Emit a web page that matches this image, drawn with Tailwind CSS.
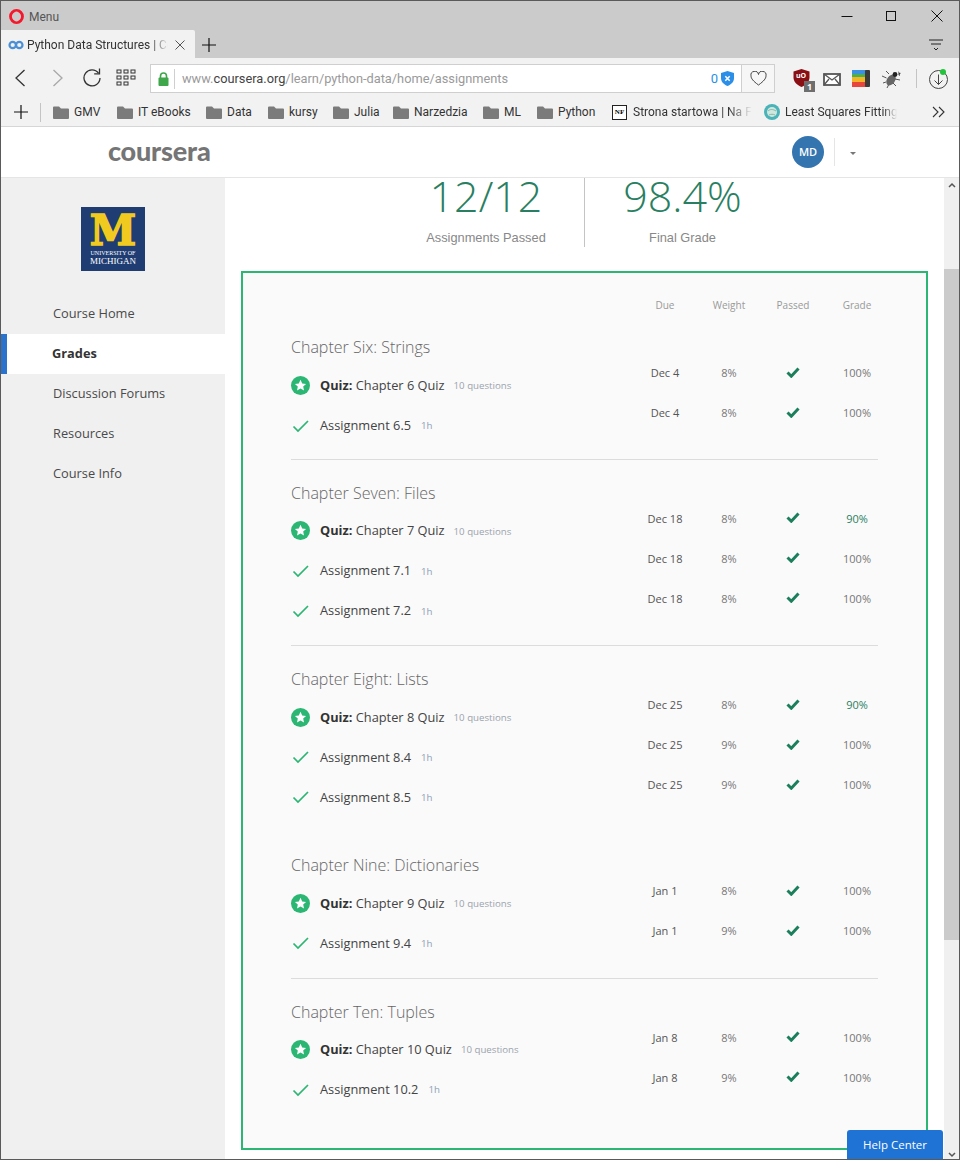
<!DOCTYPE html>
<html>
<head>
<meta charset="utf-8">
<script src="https://cdn.jsdelivr.net/npm/@tailwindcss/browser@4"></script>
</head>
<body class="bg-white">
<div class="relative w-[960px] h-[1160px] overflow-hidden flex flex-col border border-[#5a5a5a] font-['Open_Sans',sans-serif]">
  <!-- title bar -->
  <div class="h-[29px] bg-[#cbcbcb] flex items-center pl-[8px] shrink-0">
    <svg width="15" height="15" viewBox="0 0 15 15" class="mt-[2px]"><circle cx="7.500" cy="7.500" r="6" fill="none" stroke="#f5182c" stroke-width="2.800"/><ellipse cx="7.500" cy="7.500" rx="2.600" ry="5" fill="#cbcbcb"/></svg>
    <span class="ml-[5px] mt-[2px] text-[12px] text-[#555] font-['Roboto',sans-serif]">Menu</span>
    <div class="ml-auto flex items-center pr-[16px]">
      <svg width="12" height="12" viewBox="0 0 12 12" class="mr-[32px]"><path d="M0.500 6.500h11" stroke="#111" stroke-width="1"/></svg>
      <svg width="12" height="12" viewBox="0 0 12 12" class="mr-[34px] mt-[1px]"><rect x="1.500" y="1.500" width="9" height="9" fill="none" stroke="#111"/></svg>
      <svg width="12" height="12" viewBox="0 0 12 12"><path d="M0.500 0.500l11 11M11.500 0.500l-11 11" stroke="#111" stroke-width="1"/></svg>
    </div>
  </div>
  <!-- tab row -->
  <div class="h-[28px] bg-[#cbcbcb] flex items-center shrink-0">
    <div class="w-[194px] h-full bg-[#f2f2f2] flex items-center pl-[7px] pt-[2px] rounded-tr-[2px]">
      <svg width="16" height="10" viewBox="0 0 16 10"><circle cx="4.700" cy="5" r="3.200" fill="none" stroke="#4b90d6" stroke-width="2.200"/><circle cx="11.300" cy="5" r="3.200" fill="none" stroke="#4b90d6" stroke-width="2.200"/></svg>
      <span class="ml-[3px] w-[141px] whitespace-nowrap text-[12px] text-[#333] font-['Roboto',sans-serif] [mask-image:linear-gradient(to_right,black_88%,transparent)]">Python Data Structures | Co</span>
      <svg width="10" height="10" viewBox="0 0 10 10" class="ml-[7px]"><path d="M0.500 0.500l9 9M9.500 0.500l-9 9" stroke="#555" stroke-width="1"/></svg>
    </div>
    <svg width="14" height="14" viewBox="0 0 14 14" class="ml-[7px] mt-[2px]"><path d="M7 0v14M0 7h14" stroke="#111" stroke-width="1.200"/></svg>
    <svg width="14" height="12" viewBox="0 0 14 12" class="ml-auto mr-[16px] mt-[2px]"><path d="M0 1h14M2 5h10M5 9l2 2 2-2" fill="none" stroke="#222" stroke-width="1"/></svg>
  </div>
  <!-- toolbar -->
  <div class="h-[37px] bg-[#f2f2f2] flex items-start pt-[6px] shrink-0">
    <svg width="12" height="18" viewBox="0 0 12 18" class="ml-[13px] mt-[5px]"><path d="M10.500 1L2 9l8.500 8" fill="none" stroke="#333" stroke-width="1.300"/></svg>
    <svg width="12" height="18" viewBox="0 0 12 18" class="ml-[26px] mt-[5px]"><path d="M1.500 1L10 9l-8.500 8" fill="none" stroke="#a8a8a8" stroke-width="1.300"/></svg>
    <svg width="20" height="20" viewBox="0 0 20 20" class="ml-[18px] mt-[3px]"><path d="M16.500 6.200A8 8 0 1 0 18 11" fill="none" stroke="#333" stroke-width="1.300"/><path d="M17.500 1.500v5.300h-5.300" fill="none" stroke="#333" stroke-width="1.300"/></svg>
    <svg width="20" height="17" viewBox="0 0 20 17" class="ml-[14px] mt-[5px]" fill="none" stroke="#333" stroke-width="1"><rect x="1" y="1" width="4" height="3"/><rect x="8" y="1" width="4" height="3"/><rect x="15" y="1" width="4" height="3"/><rect x="1" y="7" width="4" height="3"/><rect x="8" y="7" width="4" height="3"/><rect x="15" y="7" width="4" height="3"/><rect x="1" y="13" width="4" height="3"/><rect x="8" y="13" width="4" height="3"/></svg>
    <div class="ml-[14px] w-[625px] h-[29px] bg-white border border-[#cfcfcf] flex items-center">
      <svg width="11" height="14" viewBox="0 0 11 14" class="ml-[7px]"><path d="M2.500 6V4a3 3 0 0 1 6 0v2" fill="none" stroke="#3fa64b" stroke-width="1.600"/><rect x="0.500" y="5.500" width="10" height="8.500" rx="1" fill="#3fa64b"/></svg>
      <span class="ml-[5px] w-px h-[20px] bg-[#cfcfcf]"></span>
      <span class="ml-[7px] text-[12.800px] text-[#9a9a9a] whitespace-nowrap font-['Roboto',sans-serif]">www.<span class="text-[#444]">coursera.org</span>/learn/python-data/home/assignments</span>
      <span class="ml-auto text-[13px] text-[#2b8fe8] font-['Roboto',sans-serif]">0</span>
      <svg width="13" height="15" viewBox="0 0 13 15" class="ml-[3px] mr-[7px]"><path d="M6.500 0l6.500 2v5c0 4-3 6.500-6.500 8C3 13.500 0 11 0 7V2z" fill="#2b8fe8"/><path d="M4.300 5.300l4.400 4.400M8.700 5.300l-4.400 4.400" stroke="#fff" stroke-width="1.500"/></svg>
      <div class="w-[33px] h-full bg-[#f6f6f6] border-l border-[#cfcfcf] flex items-center justify-center">
        <svg width="17" height="15" viewBox="0 0 17 15"><path d="M8.500 14C3 10 1 7.500 1 4.800A3.800 3.800 0 0 1 8.500 3.500 3.800 3.800 0 0 1 16 4.800C16 7.500 14 10 8.500 14z" fill="none" stroke="#444" stroke-width="1"/></svg>
      </div>
    </div>
    <div class="relative ml-[18px] mt-[5px] w-[18px] h-[19px]">
      <svg width="17" height="18" viewBox="0 0 17 18"><path d="M8.500 0l8 2.500v6c0 4.500-3.500 7.500-8 9.500C4 16 .5 13 .5 8.500v-6z" fill="#8a0f14"/></svg>
      <span class="absolute left-[3px] top-[3px] text-[7px] leading-[8px] font-bold text-white">uO</span>
      <span class="absolute left-[11px] top-[12px] w-[11px] h-[11px] bg-[#6e6e6e] text-white text-[9px] leading-[11px] font-bold text-center">1</span>
    </div>
    <svg width="18" height="13" viewBox="0 0 18 13" class="ml-[12px] mt-[9px]"><rect x="1" y="1" width="16" height="11" fill="#fff" stroke="#555" stroke-width="1.800"/><path d="M1 1l8 6 8-6M1 12l5-6M17 12l-5-6" fill="none" stroke="#555" stroke-width="1.300"/></svg>
    <svg width="18" height="17" viewBox="0 0 18 17" class="ml-[11px] mt-[6px]"><rect x="0" y="0" width="14" height="5" fill="#3d8fe0"/><rect x="0" y="4" width="14" height="3" fill="#4caf50"/><rect x="0" y="7" width="14" height="5" fill="#f2b527"/><rect x="0" y="12" width="14" height="5" fill="#e8453c"/><rect x="13" y="0" width="5" height="17" rx="1" fill="#3a3a3a"/></svg>
    <svg width="20" height="18" viewBox="0 0 20 18" class="ml-[12px] mt-[6px]"><ellipse cx="9" cy="10" rx="4" ry="6" transform="rotate(35 9 10)" fill="#666"/><circle cx="13" cy="4.500" r="2.400" fill="#222"/><path d="M7 4L4 1M4.500 8L0 6M4 12l-3 1M6.500 15L5 18M11 13l3 3M13 9l5 1" stroke="#555" stroke-width="1"/><path d="M16.500 1l.8 1.700 1.700.3-1.300 1.100.3 1.800-1.500-.9" fill="#333"/></svg>
    <span class="ml-[14px] mt-[5px] w-px h-[19px] bg-[#c4c4c4]"></span>
    <div class="relative ml-[12px] mt-[6px] w-[19px] h-[19px]">
      <svg width="19" height="19" viewBox="0 0 19 19"><circle cx="9.500" cy="9.500" r="9" fill="none" stroke="#444" stroke-width="1"/><path d="M9.500 4.500v10M5.500 10.500l4 4 4-4" fill="none" stroke="#444" stroke-width="1"/></svg>
      <span class="absolute left-[11px] -top-[1px] w-[6px] h-[6px] rounded-full bg-[#22c43c]"></span>
    </div>
  </div>
  <!-- bookmarks -->
  <div class="h-[32px] bg-[#f2f2f2] flex items-center pt-[3px] border-b border-[#d6d6d6] text-[12px] text-[#333] font-['Roboto',sans-serif] shrink-0">
    <svg width="14" height="14" viewBox="0 0 14 14" class="ml-[13px]"><path d="M7 0v14M0 7h14" stroke="#111" stroke-width="1.200"/></svg>
    <span class="ml-[12px] w-px h-[19px] bg-[#c4c4c4]"></span>
    <div class="ml-[12px] w-[64px] flex items-center gap-[5px]"><svg width="16" height="13" viewBox="0 0 16 13"><path d="M0 1.500a1 1 0 0 1 1-1h5l2 2h7a1 1 0 0 1 1 1v8.500a1 1 0 0 1-1 1H1a1 1 0 0 1-1-1z" fill="#7b7b7b"/></svg><span>GMV</span></div>
    <div class="w-[89px] flex items-center gap-[5px]"><svg width="16" height="13" viewBox="0 0 16 13"><path d="M0 1.500a1 1 0 0 1 1-1h5l2 2h7a1 1 0 0 1 1 1v8.500a1 1 0 0 1-1 1H1a1 1 0 0 1-1-1z" fill="#7b7b7b"/></svg><span>IT eBooks</span></div>
    <div class="w-[62px] flex items-center gap-[5px]"><svg width="16" height="13" viewBox="0 0 16 13"><path d="M0 1.500a1 1 0 0 1 1-1h5l2 2h7a1 1 0 0 1 1 1v8.500a1 1 0 0 1-1 1H1a1 1 0 0 1-1-1z" fill="#7b7b7b"/></svg><span>Data</span></div>
    <div class="w-[65px] flex items-center gap-[5px]"><svg width="16" height="13" viewBox="0 0 16 13"><path d="M0 1.500a1 1 0 0 1 1-1h5l2 2h7a1 1 0 0 1 1 1v8.500a1 1 0 0 1-1 1H1a1 1 0 0 1-1-1z" fill="#7b7b7b"/></svg><span>kursy</span></div>
    <div class="w-[60px] flex items-center gap-[5px]"><svg width="16" height="13" viewBox="0 0 16 13"><path d="M0 1.500a1 1 0 0 1 1-1h5l2 2h7a1 1 0 0 1 1 1v8.500a1 1 0 0 1-1 1H1a1 1 0 0 1-1-1z" fill="#7b7b7b"/></svg><span>Julia</span></div>
    <div class="w-[90px] flex items-center gap-[5px]"><svg width="16" height="13" viewBox="0 0 16 13"><path d="M0 1.500a1 1 0 0 1 1-1h5l2 2h7a1 1 0 0 1 1 1v8.500a1 1 0 0 1-1 1H1a1 1 0 0 1-1-1z" fill="#7b7b7b"/></svg><span>Narzedzia</span></div>
    <div class="w-[54px] flex items-center gap-[5px]"><svg width="16" height="13" viewBox="0 0 16 13"><path d="M0 1.500a1 1 0 0 1 1-1h5l2 2h7a1 1 0 0 1 1 1v8.500a1 1 0 0 1-1 1H1a1 1 0 0 1-1-1z" fill="#7b7b7b"/></svg><span>ML</span></div>
    <div class="w-[75px] flex items-center gap-[5px]"><svg width="16" height="13" viewBox="0 0 16 13"><path d="M0 1.500a1 1 0 0 1 1-1h5l2 2h7a1 1 0 0 1 1 1v8.500a1 1 0 0 1-1 1H1a1 1 0 0 1-1-1z" fill="#7b7b7b"/></svg><span>Python</span></div>
    <div class="w-[152px] flex items-center gap-[6px]">
      <span class="w-[15px] h-[15px] border border-[#222] bg-white text-[7px] leading-[13px] font-bold text-black text-center font-['Liberation_Serif',serif] shrink-0">NF</span>
      <span class="whitespace-nowrap [mask-image:linear-gradient(to_right,black_80%,transparent)]">Strona startowa | Na F</span>
    </div>
    <div class="flex items-center gap-[5px]">
      <svg width="16" height="16" viewBox="0 0 16 16"><circle cx="8" cy="8" r="8" fill="#49b3b8"/><circle cx="8" cy="8" r="5" fill="#cfe7df"/><path d="M4 7c2-2 5-2 8 0M5 11c2-1 4-1 6 0" stroke="#7fb9a8" fill="none"/></svg>
      <span class="w-[112px] whitespace-nowrap [mask-image:linear-gradient(to_right,black_88%,transparent)]">Least Squares Fitting -</span>
    </div>
    <svg width="14" height="12" viewBox="0 0 14 12" class="ml-[35px]"><path d="M1 1l5 5-5 5M7 1l5 5-5 5" fill="none" stroke="#333" stroke-width="1.100"/></svg>
  </div>
  <!-- coursera header -->
  <div class="h-[51px] bg-white border-b border-[#e5e5e5] flex items-center shrink-0">
    <span class="ml-[107px] -mt-[4px] text-[27px] leading-none font-black tracking-[-0.2px] text-[#757575] font-['Lato',sans-serif] w-[103px] whitespace-nowrap">coursera</span>
    <span class="ml-[581px] w-[32px] h-[32px] rounded-full bg-[#3475b0] text-white text-[11px] font-semibold flex items-center justify-center">MD</span>
    <span class="ml-[10px] w-px h-[28px] bg-[#e5e5e5]"></span>
    <span class="ml-[15px] w-0 h-0 border-x-[3px] border-x-transparent border-t-[3px] border-t-[#777] mt-[3px]"></span>
  </div>
  <!-- body -->
  <div class="flex-1 flex min-h-0">
    <aside class="w-[224px] bg-[#f0f0f0] shrink-0 flex flex-col">
      <div class="mt-[29px] ml-[80px] w-[64px] h-[64px] bg-[#1f3d73] flex flex-col items-center">
        <span class="mt-[6px] h-[35px] text-[#f1ca1f] text-[42px] leading-[35px] font-bold font-['DejaVu_Serif',serif] [-webkit-text-stroke:1.500px_#f1ca1f]">M</span>
        <span class="text-white text-[6px] leading-[7px] font-['Liberation_Serif',serif] mt-[2px] whitespace-nowrap">UNIVERSITY OF</span>
        <span class="text-white text-[9px] leading-[9px] font-['Liberation_Serif',serif] whitespace-nowrap">MICHIGAN</span>
      </div>
      <nav class="mt-[23px] flex flex-col text-[12.800px] text-[#4a4a4a]">
        <div class="h-10 flex items-center pl-[52px]">Course Home</div>
        <div class="h-10 flex items-center pl-[45px] bg-white border-l-[6px] border-[#2a73cc] font-bold text-[#333]">Grades</div>
        <div class="h-10 flex items-center pl-[52px]">Discussion Forums</div>
        <div class="h-10 flex items-center pl-[52px]">Resources</div>
        <div class="h-10 flex items-center pl-[52px]">Course Info</div>
      </nav>
    </aside>
    <main class="w-[719px] bg-white shrink-0">
      <div class="flex justify-center h-[69px]">
        <div class="w-[196px] border-r border-[#c4c4c4] flex flex-col items-center">
          <span class="h-[39px] -mt-[2px] text-[43px] leading-[39px] font-light text-[#2a7f62]">12/12</span>
          <span class="mt-[15px] text-[12.800px] leading-[16px] text-[#888] font-['Liberation_Sans',sans-serif]">Assignments Passed</span>
        </div>
        <div class="w-[196px] flex flex-col items-center">
          <span class="h-[39px] -mt-[2px] text-[43px] leading-[39px] font-light text-[#2a7f62]">98.4%</span>
          <span class="mt-[15px] text-[12.800px] leading-[16px] text-[#888] font-['Liberation_Sans',sans-serif]">Final Grade</span>
        </div>
      </div>
      <div class="mx-[16px] mt-[24px] h-[879px] border-2 border-[#2bb673] bg-[#fafafa] px-[48px] overflow-hidden">
        <div class="flex justify-end -mr-[11px] h-[41px] pt-[23px] text-[10px] leading-[18px] text-[#999]">
          <div class="w-[256px] grid grid-cols-4 text-center"><span>Due</span><span>Weight</span><span>Passed</span><span>Grade</span></div>
        </div>

        <!-- Chapter 6 -->
        <section class="pt-[17px] pb-[13.450px] border-b border-[#dcdcdc]">
          <h2 class="h-[32px] mb-[2.500px] flex items-center text-[16px] font-light text-[#666]">Chapter Six: Strings</h2>
          <div class="flex">
            <div class="flex-1 text-[12.800px] text-[#444]">
              <div class="h-10 flex items-center"><svg width="19" height="19" viewBox="0 0 19 19" class="mr-[10px]"><circle cx="9.500" cy="9.500" r="9.500" fill="#2bb673"/><path d="M9.500 3.800l1.700 3.600 3.900.5-2.900 2.700.8 3.900-3.500-2-3.500 2 .8-3.900-2.900-2.700 3.900-.5z" fill="#fff"/></svg><span><b class="text-[#333]">Quiz:</b> Chapter 6 Quiz</span><span class="ml-[9px] mt-[2px] text-[9.700px] text-[#9aa3ad]">10 questions</span></div>
              <div class="h-10 flex items-center"><svg width="19" height="14" viewBox="0 0 19 14" class="mr-[10px]"><path d="M2.500 7.500l4.500 4.500L17 2" fill="none" stroke="#2bb673" stroke-width="1.700"/></svg><span>Assignment 6.5</span><span class="ml-[10px] mt-[2px] text-[9.700px] text-[#8fa0b5]">1h</span></div>
            </div>
            <div class="w-[256px] -mr-[11px] -mt-[12.500px] text-[11px] text-[#777] text-center">
              <div class="h-10 grid grid-cols-4 items-center"><span class="text-[#555]">Dec 4</span><span>8%</span><svg width="14" height="11" viewBox="0 0 14 11" class="justify-self-center -mt-[2px]"><path d="M1.500 5.500l3.800 3.700L12.500 1.500" fill="none" stroke="#1b7f5c" stroke-width="3"/></svg><span>100%</span></div>
              <div class="h-10 grid grid-cols-4 items-center"><span class="text-[#555]">Dec 4</span><span>8%</span><svg width="14" height="11" viewBox="0 0 14 11" class="justify-self-center -mt-[2px]"><path d="M1.500 5.500l3.800 3.700L12.500 1.500" fill="none" stroke="#1b7f5c" stroke-width="3"/></svg><span>100%</span></div>
            </div>
          </div>
        </section>

        <!-- Chapter 7 -->
        <section class="pt-[17px] pb-[14.250px] border-b border-[#dcdcdc]">
          <h2 class="h-[32px] mb-[2px] flex items-center text-[16px] font-light text-[#666]">Chapter Seven: Files</h2>
          <div class="flex">
            <div class="flex-1 text-[12.800px] text-[#444]">
              <div class="h-10 flex items-center"><svg width="19" height="19" viewBox="0 0 19 19" class="mr-[10px]"><circle cx="9.500" cy="9.500" r="9.500" fill="#2bb673"/><path d="M9.500 3.800l1.700 3.600 3.900.5-2.900 2.700.8 3.900-3.500-2-3.500 2 .8-3.900-2.900-2.700 3.900-.5z" fill="#fff"/></svg><span><b class="text-[#333]">Quiz:</b> Chapter 7 Quiz</span><span class="ml-[9px] mt-[2px] text-[9.700px] text-[#9aa3ad]">10 questions</span></div>
              <div class="h-10 flex items-center"><svg width="19" height="14" viewBox="0 0 19 14" class="mr-[10px]"><path d="M2.500 7.500l4.500 4.500L17 2" fill="none" stroke="#2bb673" stroke-width="1.700"/></svg><span>Assignment 7.1</span><span class="ml-[10px] mt-[2px] text-[9.700px] text-[#8fa0b5]">1h</span></div>
              <div class="h-10 flex items-center"><svg width="19" height="14" viewBox="0 0 19 14" class="mr-[10px]"><path d="M2.500 7.500l4.500 4.500L17 2" fill="none" stroke="#2bb673" stroke-width="1.700"/></svg><span>Assignment 7.2</span><span class="ml-[10px] mt-[2px] text-[9.700px] text-[#8fa0b5]">1h</span></div>
            </div>
            <div class="w-[256px] -mr-[11px] -mt-[12px] text-[11px] text-[#777] text-center">
              <div class="h-10 grid grid-cols-4 items-center"><span class="text-[#555]">Dec 18</span><span>8%</span><svg width="14" height="11" viewBox="0 0 14 11" class="justify-self-center -mt-[2px]"><path d="M1.500 5.500l3.800 3.700L12.500 1.500" fill="none" stroke="#1b7f5c" stroke-width="3"/></svg><span class="text-[#2a7f62]">90%</span></div>
              <div class="h-10 grid grid-cols-4 items-center"><span class="text-[#555]">Dec 18</span><span>8%</span><svg width="14" height="11" viewBox="0 0 14 11" class="justify-self-center -mt-[2px]"><path d="M1.500 5.500l3.800 3.700L12.500 1.500" fill="none" stroke="#1b7f5c" stroke-width="3"/></svg><span>100%</span></div>
              <div class="h-10 grid grid-cols-4 items-center"><span class="text-[#555]">Dec 18</span><span>8%</span><svg width="14" height="11" viewBox="0 0 14 11" class="justify-self-center -mt-[2px]"><path d="M1.500 5.500l3.800 3.700L12.500 1.500" fill="none" stroke="#1b7f5c" stroke-width="3"/></svg><span>100%</span></div>
            </div>
          </div>
        </section>

        <!-- Chapter 8 -->
        <section class="pt-[17px] pb-[14.250px] border-b border-transparent">
          <h2 class="h-[32px] mb-[2px] flex items-center text-[16px] font-light text-[#666]">Chapter Eight: Lists</h2>
          <div class="flex">
            <div class="flex-1 text-[12.800px] text-[#444]">
              <div class="h-10 flex items-center"><svg width="19" height="19" viewBox="0 0 19 19" class="mr-[10px]"><circle cx="9.500" cy="9.500" r="9.500" fill="#2bb673"/><path d="M9.500 3.800l1.700 3.600 3.900.5-2.900 2.700.8 3.900-3.500-2-3.500 2 .8-3.900-2.900-2.700 3.900-.5z" fill="#fff"/></svg><span><b class="text-[#333]">Quiz:</b> Chapter 8 Quiz</span><span class="ml-[9px] mt-[2px] text-[9.700px] text-[#9aa3ad]">10 questions</span></div>
              <div class="h-10 flex items-center"><svg width="19" height="14" viewBox="0 0 19 14" class="mr-[10px]"><path d="M2.500 7.500l4.500 4.500L17 2" fill="none" stroke="#2bb673" stroke-width="1.700"/></svg><span>Assignment 8.4</span><span class="ml-[10px] mt-[2px] text-[9.700px] text-[#8fa0b5]">1h</span></div>
              <div class="h-10 flex items-center"><svg width="19" height="14" viewBox="0 0 19 14" class="mr-[10px]"><path d="M2.500 7.500l4.500 4.500L17 2" fill="none" stroke="#2bb673" stroke-width="1.700"/></svg><span>Assignment 8.5</span><span class="ml-[10px] mt-[2px] text-[9.700px] text-[#8fa0b5]">1h</span></div>
            </div>
            <div class="w-[256px] -mr-[11px] -mt-[12px] text-[11px] text-[#777] text-center">
              <div class="h-10 grid grid-cols-4 items-center"><span class="text-[#555]">Dec 25</span><span>8%</span><svg width="14" height="11" viewBox="0 0 14 11" class="justify-self-center -mt-[2px]"><path d="M1.500 5.500l3.800 3.700L12.500 1.500" fill="none" stroke="#1b7f5c" stroke-width="3"/></svg><span class="text-[#2a7f62]">90%</span></div>
              <div class="h-10 grid grid-cols-4 items-center"><span class="text-[#555]">Dec 25</span><span>9%</span><svg width="14" height="11" viewBox="0 0 14 11" class="justify-self-center -mt-[2px]"><path d="M1.500 5.500l3.800 3.700L12.500 1.500" fill="none" stroke="#1b7f5c" stroke-width="3"/></svg><span>100%</span></div>
              <div class="h-10 grid grid-cols-4 items-center"><span class="text-[#555]">Dec 25</span><span>9%</span><svg width="14" height="11" viewBox="0 0 14 11" class="justify-self-center -mt-[2px]"><path d="M1.500 5.500l3.800 3.700L12.500 1.500" fill="none" stroke="#1b7f5c" stroke-width="3"/></svg><span>100%</span></div>
            </div>
          </div>
        </section>

        <!-- Chapter 9 -->
        <section class="pt-[17px] pb-[14.250px] border-b border-[#dcdcdc]">
          <h2 class="h-[32px] mb-[2px] flex items-center text-[16px] font-light text-[#666]">Chapter Nine: Dictionaries</h2>
          <div class="flex">
            <div class="flex-1 text-[12.800px] text-[#444]">
              <div class="h-10 flex items-center"><svg width="19" height="19" viewBox="0 0 19 19" class="mr-[10px]"><circle cx="9.500" cy="9.500" r="9.500" fill="#2bb673"/><path d="M9.500 3.800l1.700 3.600 3.900.5-2.900 2.700.8 3.900-3.500-2-3.500 2 .8-3.900-2.900-2.700 3.900-.5z" fill="#fff"/></svg><span><b class="text-[#333]">Quiz:</b> Chapter 9 Quiz</span><span class="ml-[9px] mt-[2px] text-[9.700px] text-[#9aa3ad]">10 questions</span></div>
              <div class="h-10 flex items-center"><svg width="19" height="14" viewBox="0 0 19 14" class="mr-[10px]"><path d="M2.500 7.500l4.500 4.500L17 2" fill="none" stroke="#2bb673" stroke-width="1.700"/></svg><span>Assignment 9.4</span><span class="ml-[10px] mt-[2px] text-[9.700px] text-[#8fa0b5]">1h</span></div>
            </div>
            <div class="w-[256px] -mr-[11px] -mt-[12px] text-[11px] text-[#777] text-center">
              <div class="h-10 grid grid-cols-4 items-center"><span class="text-[#555]">Jan 1</span><span>8%</span><svg width="14" height="11" viewBox="0 0 14 11" class="justify-self-center -mt-[2px]"><path d="M1.500 5.500l3.800 3.700L12.500 1.500" fill="none" stroke="#1b7f5c" stroke-width="3"/></svg><span>100%</span></div>
              <div class="h-10 grid grid-cols-4 items-center"><span class="text-[#555]">Jan 1</span><span>9%</span><svg width="14" height="11" viewBox="0 0 14 11" class="justify-self-center -mt-[2px]"><path d="M1.500 5.500l3.800 3.700L12.500 1.500" fill="none" stroke="#1b7f5c" stroke-width="3"/></svg><span>100%</span></div>
            </div>
          </div>
        </section>

        <!-- Chapter 10 -->
        <section class="pt-[17px] pb-[14.250px]">
          <h2 class="h-[32px] mb-[2px] flex items-center text-[16px] font-light text-[#666]">Chapter Ten: Tuples</h2>
          <div class="flex">
            <div class="flex-1 text-[12.800px] text-[#444]">
              <div class="h-10 flex items-center"><svg width="19" height="19" viewBox="0 0 19 19" class="mr-[10px]"><circle cx="9.500" cy="9.500" r="9.500" fill="#2bb673"/><path d="M9.500 3.800l1.700 3.600 3.900.5-2.900 2.700.8 3.900-3.500-2-3.500 2 .8-3.900-2.900-2.700 3.900-.5z" fill="#fff"/></svg><span><b class="text-[#333]">Quiz:</b> Chapter 10 Quiz</span><span class="ml-[9px] mt-[2px] text-[9.700px] text-[#9aa3ad]">10 questions</span></div>
              <div class="h-10 flex items-center"><svg width="19" height="14" viewBox="0 0 19 14" class="mr-[10px]"><path d="M2.500 7.500l4.500 4.500L17 2" fill="none" stroke="#2bb673" stroke-width="1.700"/></svg><span>Assignment 10.2</span><span class="ml-[10px] mt-[2px] text-[9.700px] text-[#8fa0b5]">1h</span></div>
            </div>
            <div class="w-[256px] -mr-[11px] -mt-[11px] text-[11px] text-[#777] text-center">
              <div class="h-10 grid grid-cols-4 items-center"><span class="text-[#555]">Jan 8</span><span>8%</span><svg width="14" height="11" viewBox="0 0 14 11" class="justify-self-center -mt-[4px]"><path d="M1.500 5.500l3.800 3.700L12.500 1.500" fill="none" stroke="#1b7f5c" stroke-width="3"/></svg><span>100%</span></div>
              <div class="h-10 grid grid-cols-4 items-center"><span class="text-[#555]">Jan 8</span><span>9%</span><svg width="14" height="11" viewBox="0 0 14 11" class="justify-self-center -mt-[4px]"><path d="M1.500 5.500l3.800 3.700L12.500 1.500" fill="none" stroke="#1b7f5c" stroke-width="3"/></svg><span>100%</span></div>
            </div>
          </div>
        </section>
      </div>
    </main>
    <!-- scrollbar -->
    <div class="flex-1 bg-[#f0f0f0] flex flex-col items-center">
      <svg width="8" height="6" viewBox="0 0 8 6" class="mt-[4px]"><path d="M1 5l3-3 3 3" fill="none" stroke="#555" stroke-width="1.500"/></svg>
      <div class="mt-[81px] w-full h-[671px] bg-[#cbcbcb]"></div>
      <svg width="8" height="6" viewBox="0 0 8 6" class="mt-auto mb-[1px]"><path d="M1 1l3 3 3-3" fill="none" stroke="#555" stroke-width="1.500"/></svg>
    </div>
  </div>
  <!-- help center -->
  <div class="absolute left-[846px] top-[1129px] w-[96px] h-[30px] bg-[#1f73d4] rounded-t-[3px] text-white text-[11.500px] font-medium flex items-center justify-center">Help Center</div>
</div>
</body>
</html>
